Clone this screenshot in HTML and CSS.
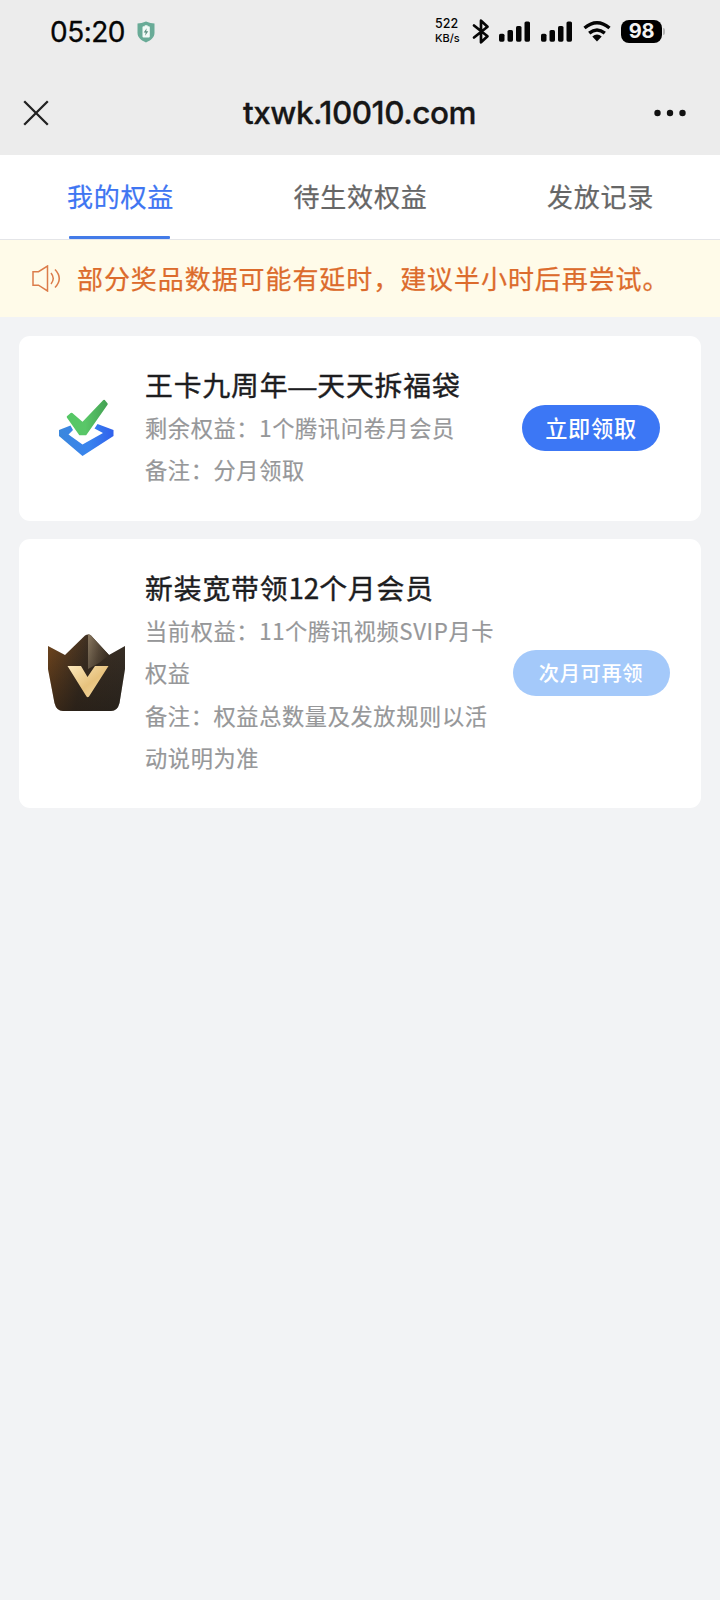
FILE: index.html
```
<!DOCTYPE html>
<html lang="zh-CN">
<head>
<meta charset="utf-8">
<title>我的权益</title>
<link rel="stylesheet" href="styles.css">
</head>
<body>
<header class="top">
  <div class="status">
    <span class="time">05:20</span>
    <svg class="shield" width="18" height="22" viewBox="0 0 18 22"><path d="M9 .6C6 1.8 3 2.4.5 2.6v9.200C.5 16.500 4 19.500 9 21.400c5-1.900 8.500-4.900 8.500-9.600V2.600C15 2.400 12 1.800 9 .6z" fill="#69ab97"/><path d="M6.500 5.200h1.200v-1h2.900v1h1.200q1 0 1 1v9.300q0 1-1 1H6.500q-1 0-1-1V6.200q0-1 1-1z" fill="#f3faf7"/><path d="M9.700 7.200 6.700 11.600h2l-.6 3.200 3.200-4.600H9.200z" fill="#5c8f80"/></svg>
    <span class="speed"><span>522</span><span>KB/s</span></span>
    <svg class="bt" width="18" height="27" viewBox="0 0 18 27"><path d="M2 7.500 15.500 18.200 9 24.300V2.700l6.500 6.100L2 19.500" fill="none" stroke="#050505" stroke-width="2.700" stroke-linejoin="round" stroke-linecap="round"/></svg>
    <svg class="signal" width="32" height="21" viewBox="0 0 32 21" fill="#050505"><rect x="0" y="12.700" width="5.500" height="8" rx="1.600"/><rect x="8.500" y="9" width="5.500" height="11.700" rx="1.600"/><rect x="17" y="5" width="5.500" height="15.700" rx="1.600"/><rect x="25.500" y=".5" width="5.500" height="20.200" rx="1.600"/></svg>
    <svg class="signal" width="32" height="21" viewBox="0 0 32 21" fill="#050505"><rect x="0" y="12.700" width="5.500" height="8" rx="1.600"/><rect x="8.500" y="9" width="5.500" height="11.700" rx="1.600"/><rect x="17" y="5" width="5.500" height="15.700" rx="1.600"/><rect x="25.500" y=".5" width="5.500" height="20.200" rx="1.600"/></svg>
    <svg class="wifi" width="28" height="21" viewBox="0 0 28 21"><path d="M1.500 7Q14-3.400 26.500 7M6.200 12.100Q14 5.700 21.800 12.100" fill="none" stroke="#050505" stroke-width="3.400"/><path d="M9.300 15.400Q14 11.600 18.700 15.400L14 20.400z" fill="#050505"/></svg>
    <span class="battery">98</span><i class="cap"></i>
  </div>
  <nav class="bar">
    <svg class="close" width="26" height="26" viewBox="0 0 26 26"><path d="M1.200 1.200 24.800 24.800M24.800 1.200 1.200 24.800" stroke="#222" stroke-width="2.300"/></svg>
    <h1 class="host">txwk.10010.com</h1>
    <svg class="more" width="32" height="8" viewBox="0 0 32 8" fill="#111"><circle cx="3.500" cy="4" r="3.200"/><circle cx="16" cy="4" r="3.200"/><circle cx="28.500" cy="4" r="3.200"/></svg>
  </nav>
</header>
<div class="tabs">
  <a class="tab active">我的权益</a>
  <a class="tab">待生效权益</a>
  <a class="tab">发放记录</a>
</div>
<div class="notice">
  <svg class="horn" width="29" height="27" viewBox="0 0 29 27" fill="none" stroke="#dc7c4a" stroke-width="1.500"><path d="M1 6.700H6.500L15.500 1V26L6.500 20.200H1z"/><path d="M19 8Q23.500 13.500 19 19M23 4.500Q31.500 13.500 23 22.500"/></svg>
  <span>部分奖品数据可能有延时，建议半小时后再尝试。</span>
</div>
<main class="list">
  <section class="card">
    <div class="icon">
      <svg width="80" height="80" viewBox="0 0 80 80"><defs><linearGradient id="green" x1="0" x2="1"><stop offset="0" stop-color="#55c765"/><stop offset=".45" stop-color="#59c768"/><stop offset="1" stop-color="#45a354"/></linearGradient><linearGradient id="blue" x1="0" x2="1"><stop offset="0" stop-color="#3b87dc"/><stop offset=".55" stop-color="#3984ee"/><stop offset="1" stop-color="#3060ed"/></linearGradient></defs><path d="M23.500 37.500 12 42V48L35.500 68 66.500 48V42L50.500 36 47.500 40.500 56 45 35.500 56.500 21.500 46.500 26 42z" fill="url(#blue)"/><path d="M21 29 24.500 26 35.500 35.500 57 13 59.500 16 38.500 46H33z" fill="url(#green)" stroke="url(#green)" stroke-width="2.500" stroke-linejoin="round"/></svg>
    </div>
    <div class="info">
      <h2>王卡九周年<span class="dash">—</span>天天拆福袋</h2>
      <p>剩余权益：1个腾讯问卷月会员</p>
      <p>备注：分月领取</p>
    </div>
    <div class="action"><button class="btn">立即领取</button></div>
  </section>
  <section class="card">
    <div class="icon">
      <svg width="80" height="80" viewBox="0 0 80 80"><defs><linearGradient id="crown" x1="0" y1=".4" x2="1" y2=".6"><stop offset="0" stop-color="#70461f"/><stop offset=".45" stop-color="#3d2f22"/><stop offset="1" stop-color="#383027"/></linearGradient><linearGradient id="peak" x1="0" y1=".4" x2="1" y2=".6"><stop offset="0" stop-color="#85745d"/><stop offset=".5" stop-color="#5b4c3b"/><stop offset="1" stop-color="#3c3024"/></linearGradient><linearGradient id="gold" x1="0" x2="1" y2="1"><stop offset="0" stop-color="#fce9bd"/><stop offset=".55" stop-color="#e7c27d"/><stop offset="1" stop-color="#f8dfac"/></linearGradient><linearGradient id="fade" x2="0" y2="1"><stop offset="0" stop-color="#17130f" stop-opacity="0"/><stop offset="1" stop-color="#17130f" stop-opacity=".5"/></linearGradient></defs><path d="M1 13 18 22 38 2.500Q41 .5 44 2.500L62 22 78 13V36L72.500 70Q70.500 78 64 78H16Q9.500 78 7.500 70L1 36z" fill="url(#crown)"/><path d="M41 1.200Q43 1.200 44 2.500L62 22 52 30 41 36z" fill="url(#peak)"/><path d="M1 13 18 22 38 2.500Q41 .5 44 2.500L62 22 78 13V36L72.500 70Q70.500 78 64 78H16Q9.500 78 7.500 70L1 36z" fill="url(#fade)"/><path d="M20.500 33H34L40.500 44 48 33H61.500L42 63.500Q40.800 65 39.500 63.500z" fill="url(#gold)"/></svg>
    </div>
    <div class="info">
      <h2>新装宽带领<span class="num">12</span>个月会员</h2>
      <p>当前权益：11个腾讯视频SVIP月卡<br>权益</p>
      <p>备注：权益总数量及发放规则以活<br>动说明为准</p>
    </div>
    <div class="action"><button class="btn waiting">次月可再领</button></div>
  </section>
</main>
</body>
</html>
```
FILE: styles.css
```
* { box-sizing: border-box; }
body {
  margin: 0;
  min-height: 1600px;
  background: #f2f3f5;
  font-family: "Noto Sans CJK SC", sans-serif;
  white-space: nowrap;
}
h1, h2, p { margin: 0; font-weight: 400; }
svg { display: block; flex: none; }
.top { height: 155px; background: #ececec; font-family: Inter, sans-serif; }
.status { height: 63px; display: flex; align-items: center; padding-left: 50px; color: #050505; }
.time { width: 87px; font-size: 28px; letter-spacing: -0.5px; -webkit-text-stroke: .3px; }
.shield { margin-right: 280px; }
.speed { width: 37px; display: flex; flex-direction: column; font-size: 12.5px; line-height: 14px; font-weight: 500; padding-bottom: 2px; }
.speed span:last-child { font-size: 11px; }
.bt { margin-right: 9px; }
.signal { margin-right: 10px; }
.wifi { margin-right: 10px; }
.battery { width: 41px; height: 23px; border-radius: 8px; background: #000; color: #f2f2f2; font-size: 20px; line-height: 23px; font-weight: 700; letter-spacing: -.3px; text-align: center; }
.cap { width: 2px; height: 7px; margin-left: 1px; background: #b5b5b5; border-radius: 0 2px 2px 0; }
.bar { height: 92px; padding: 7px 34px 0 23px; display: flex; align-items: center; justify-content: space-between; }
.close { margin-right: 6px; }
.host { font-size: 31.5px; font-weight: 500; letter-spacing: -.5px; color: #171717; padding-left: 10px; -webkit-text-stroke: .3px; }
.tabs { height: 85px; background: #fff; border-bottom: 1px solid #e4e5e8; display: grid; grid-template-columns: repeat(3, 1fr); }
.tab { display: flex; flex-direction: column; align-items: center; color: #666; font-size: 26px; letter-spacing: .8px; line-height: 40px; padding: 21px 0 0 1px; -webkit-text-stroke: .25px; }
.active { color: #3e75f2; }
.active::after { content: ""; width: 101px; height: 3px; margin: 20px 2px 0 0; border-radius: 1px; background: #437be8; }
.notice { height: 77px; display: flex; align-items: center; gap: 16px; padding: 0 0 1px 32px; background: #fffbe9; color: #dc6b2c; font-size: 26px; letter-spacing: .93px; -webkit-text-stroke: .25px; }
.notice span { padding-bottom: 2px; }
.list { padding: 19px; display: grid; grid-template-columns: minmax(0, 1fr); gap: 18.400px; }
.card { background: #fff; border-radius: 11px; padding: 26px 0 30px 28px; display: flex; align-items: center; }
.icon { width: 98px; flex: none; padding-top: 3px; }
.info { flex: 1; min-width: 0; }
.info h2 { height: 43.800px; color: #1d1d1f; font-size: 27.8px; letter-spacing: .9px; line-height: 44px; -webkit-text-stroke: .4px; }
.num { letter-spacing: -.1px; }
.dash { font-family: "Liberation Sans", sans-serif; line-height: 1; }
.info p { color: #969799; font-size: 22.200px; letter-spacing: .65px; line-height: 42.400px; -webkit-text-stroke: .2px; }
.action { width: 220px; flex: none; display: flex; justify-content: center; padding-top: 3px; }
.btn { border: 0; width: 138px; height: 46px; padding: 0 0 2px; border-radius: 23px; background: #3c77f5; color: #fff; font: 500 22.200px/44px "Noto Sans CJK SC", sans-serif; letter-spacing: .7px; }
.waiting { width: 157px; background: #a4c9fa; font-size: 20.300px; letter-spacing: .6px; }
```
